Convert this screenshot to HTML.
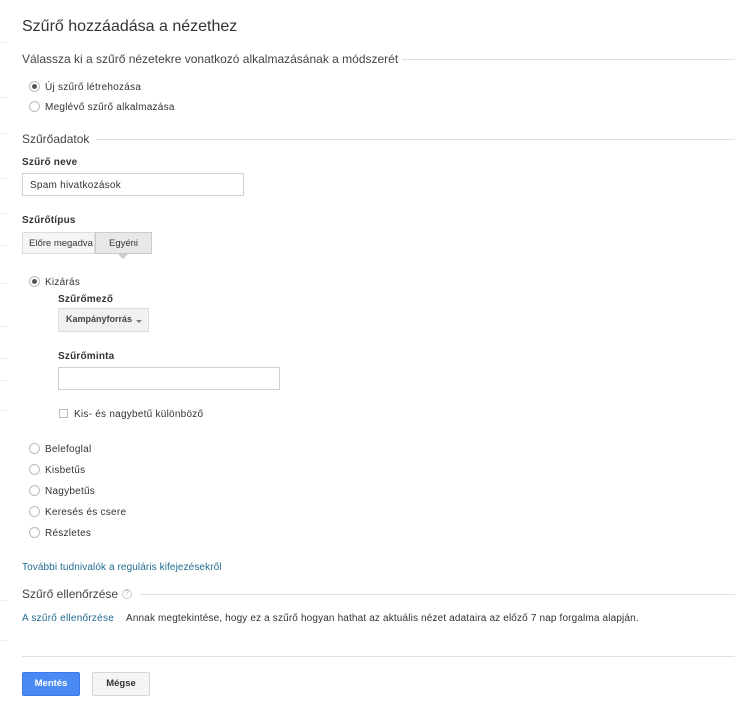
<!DOCTYPE html>
<html><head><meta charset="utf-8"><style>
*{margin:0;padding:0;box-sizing:border-box}
body{width:735px;height:713px;background:#fff;font-family:"Liberation Sans",Arial,sans-serif;color:#222;position:relative;overflow:hidden}
.a{position:absolute;white-space:nowrap}
.s{font-size:10px;color:#333;letter-spacing:0.25px;margin-top:1px}
.b{font-size:10px;font-weight:bold;color:#333;letter-spacing:0.2px}
.h{font-size:12px;color:#444}
.line{position:absolute;height:1px;background:#e0e0e0}
.r{position:absolute;width:11px;height:11px;border:1px solid #bbb;border-radius:50%;background:#fff}
.r.on::after{content:"";position:absolute;left:2px;top:2px;width:5px;height:5px;border-radius:50%;background:#555}
.in{position:absolute;border:1px solid #d0d0d0;background:#fff}
.sb{position:absolute;left:0;width:8px;height:1px;background:#eee}
</style></head><body>
<div class="sb" style="top:42px"></div><div class="sb" style="top:97px"></div><div class="sb" style="top:133px"></div><div class="sb" style="top:178px"></div><div class="sb" style="top:213px"></div><div class="sb" style="top:245px"></div><div class="sb" style="top:283px"></div><div class="sb" style="top:326px"></div><div class="sb" style="top:358px"></div><div class="sb" style="top:380px"></div><div class="sb" style="top:410px"></div><div class="sb" style="top:600px"></div><div class="sb" style="top:640px"></div>
<div class="a" style="left:22px;top:18px;font-size:16px;color:#333">Szűrő hozzáadása a nézethez</div>
<div class="a h" style="left:22px;top:52px">Válassza ki a szűrő nézetekre vonatkozó alkalmazásának a módszerét</div>
<div class="line" style="left:402px;top:59px;width:333px"></div>
<div class="r on" style="left:29px;top:81px"></div><div class="a s" style="left:45px;top:81px">Új szűrő létrehozása</div>
<div class="r" style="left:29px;top:101px"></div><div class="a s" style="left:45px;top:101px">Meglévő szűrő alkalmazása</div>
<div class="a h" style="left:22px;top:132px">Szűrőadatok</div>
<div class="line" style="left:96px;top:139px;width:639px"></div>
<div class="a b" style="left:22px;top:157px">Szűrő neve</div>
<div class="in" style="left:22px;top:173px;width:222px;height:23px"></div>
<div class="a s" style="left:30px;top:179px">Spam hivatkozások</div>
<div class="a b" style="left:22px;top:215px">Szűrőtípus</div>
<div class="in" style="left:22px;top:232px;width:73px;height:22px;background:#f5f5f5;border-color:#ddd"></div>
<div class="a" style="left:29px;top:238px;font-size:9.5px;color:#333">Előre megadva</div>
<div class="in" style="left:95px;top:232px;width:57px;height:22px;background:#e8e8e8;border-color:#ccc"></div>
<div class="a" style="left:109px;top:238px;font-size:9.5px;color:#333">Egyéni</div>
<div class="a" style="left:118px;top:254px;width:0;height:0;border-left:5px solid transparent;border-right:5px solid transparent;border-top:5px solid #ccc"></div>
<div class="r on" style="left:29px;top:276px"></div><div class="a s" style="left:45px;top:276px">Kizárás</div>
<div class="a b" style="left:58px;top:294px">Szűrőmező</div>
<div class="in" style="left:58px;top:308px;width:91px;height:24px;background:#f1f1f1;border-color:#ddd"></div>
<div class="a" style="left:66px;top:314px;font-size:9px;font-weight:bold;color:#444">Kampányforrás</div>
<div class="a" style="left:136px;top:320px;width:0;height:0;border-left:3px solid transparent;border-right:3px solid transparent;border-top:3px solid #777"></div>
<div class="a b" style="left:58px;top:351px">Szűrőminta</div>
<div class="in" style="left:58px;top:367px;width:222px;height:23px"></div>
<div class="a" style="left:59px;top:409px;width:9px;height:9px;border:1px solid #bbb"></div>
<div class="a s" style="left:74px;top:408px">Kis- és nagybetű különböző</div>
<div class="r" style="left:29px;top:443px"></div><div class="a s" style="left:45px;top:443px">Belefoglal</div>
<div class="r" style="left:29px;top:464px"></div><div class="a s" style="left:45px;top:464px">Kisbetűs</div>
<div class="r" style="left:29px;top:485px"></div><div class="a s" style="left:45px;top:485px">Nagybetűs</div>
<div class="r" style="left:29px;top:506px"></div><div class="a s" style="left:45px;top:506px">Keresés és csere</div>
<div class="r" style="left:29px;top:527px"></div><div class="a s" style="left:45px;top:527px">Részletes</div>
<div class="a s" style="left:22px;top:561px;color:#1f6a8f;letter-spacing:0.1px">További tudnivalók a reguláris kifejezésekről</div>
<div class="a h" style="left:22px;top:587px">Szűrő ellenőrzése</div>
<div class="a" style="left:122px;top:589px;width:10px;height:10px;border:1px solid #ccc;border-radius:50%;font-size:7px;color:#aaa;text-align:center;line-height:8px">?</div>
<div class="line" style="left:140px;top:594px;width:595px"></div>
<div class="a s" style="left:22px;top:612px;color:#1f6a8f">A szűrő ellenőrzése</div>
<div class="a s" style="left:126px;top:612px;letter-spacing:0.15px">Annak megtekintése, hogy ez a szűrő hogyan hathat az aktuális nézet adataira az előző 7 nap forgalma alapján.</div>
<div class="line" style="left:22px;top:656px;width:713px"></div>
<div class="a" style="left:22px;top:672px;width:58px;height:24px;background:#4a8af4;border:1px solid #3b78e7;border-radius:2px;color:#fff;font-size:9.5px;font-weight:bold;text-align:center;line-height:22px">Mentés</div>
<div class="a" style="left:92px;top:672px;width:58px;height:24px;background:#f5f5f5;border:1px solid #d6d6d6;border-radius:2px;color:#333;font-size:9.5px;font-weight:bold;text-align:center;line-height:22px">Mégse</div>
</body></html>
